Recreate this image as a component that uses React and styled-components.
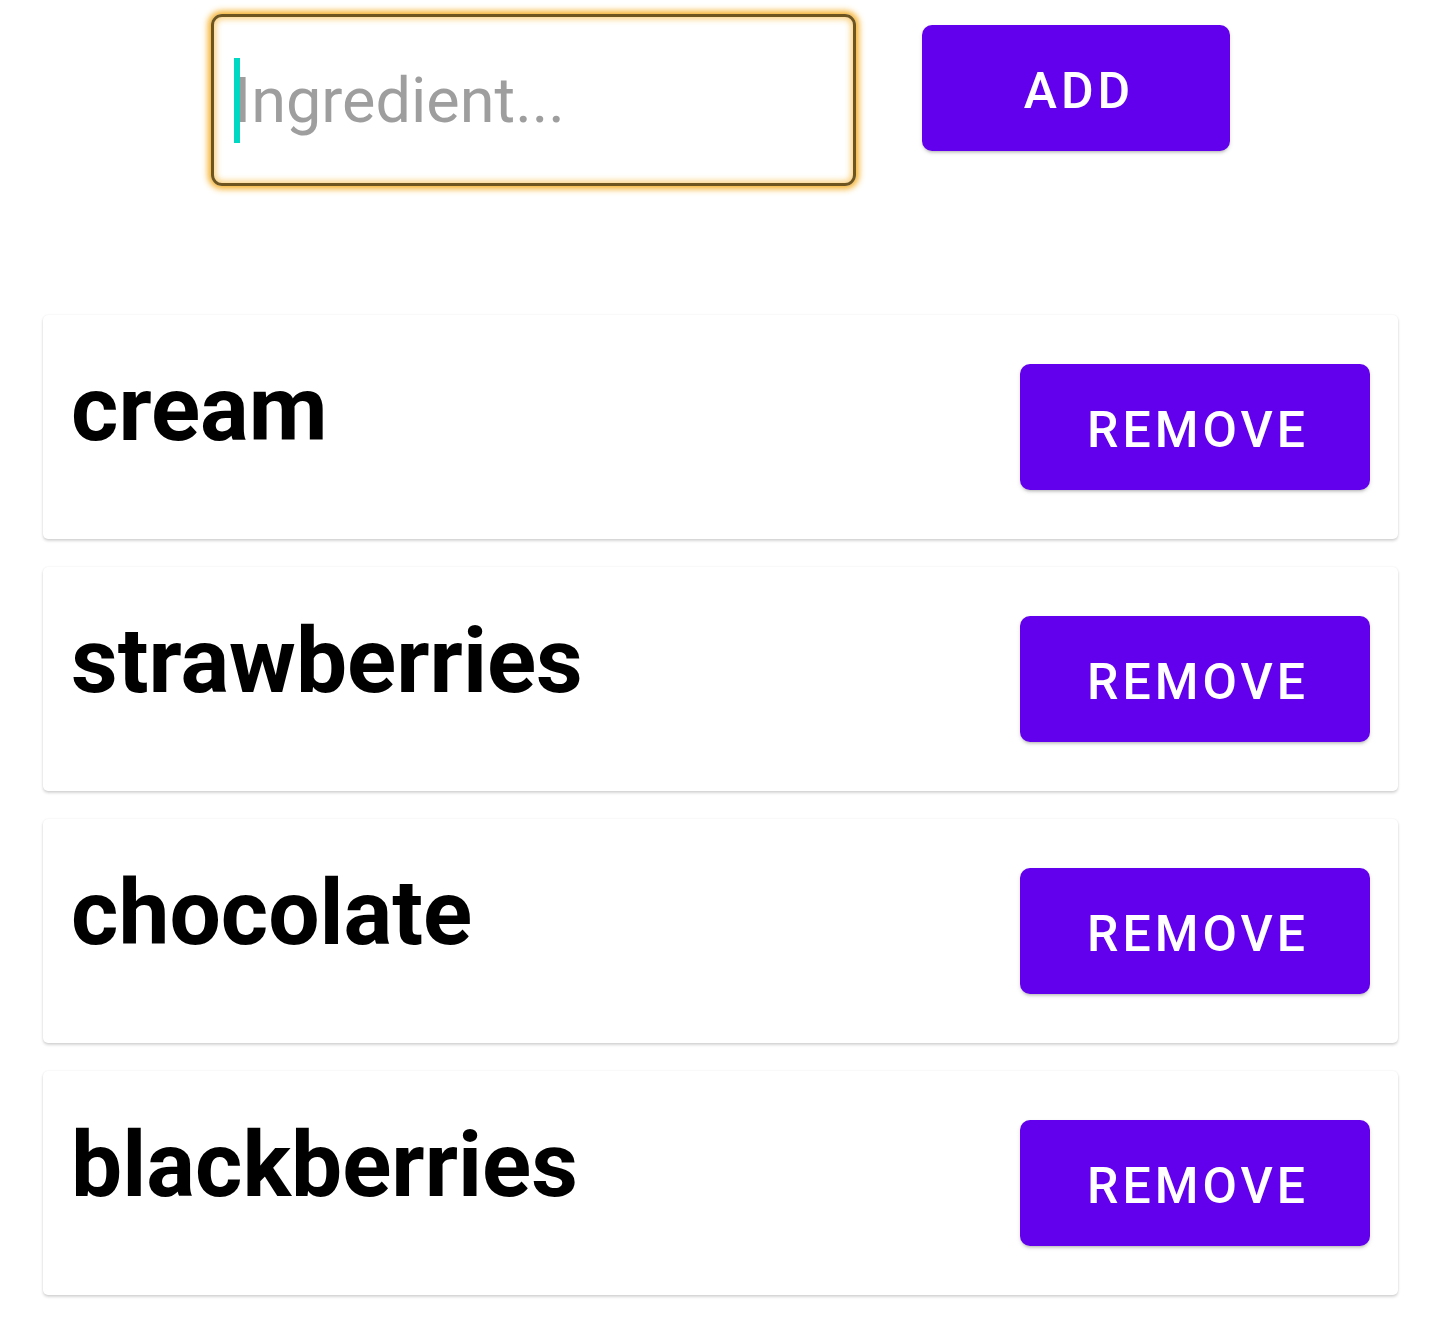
import React from "react";
import styled, { createGlobalStyle } from "styled-components";

const GlobalStyle = createGlobalStyle`
  body {
    margin: 0;
    background: #ffffff;
    font-family: Roboto, "Noto Sans", sans-serif;
  }
`;

const Page = styled.div`
  display: flex;
  flex-direction: column;
  padding: 14px 42px 40px 43px;
`;

const Form = styled.form`
  display: flex;
  align-items: flex-start;
  padding-left: 168px;
  gap: 66px;
  margin-bottom: 129px;
`;

const Field = styled.div`
  position: relative;
  width: 645px;
  height: 172px;
  box-sizing: border-box;
  border: 3px solid #6e5520;
  border-radius: 11px;
  box-shadow: 0 0 6px 3px #f5b02a, inset 0 0 6px 2px #fbd07a;
  display: flex;
  align-items: center;
`;

const Input = styled.input`
  border: none;
  outline: none;
  background: transparent;
  width: 100%;
  padding: 0 0 0 20px;
  font-family: Roboto, sans-serif;
  font-size: 63px;
  font-weight: 400;
  color: #222;
  caret-color: #00d8c4;

  &::placeholder {
    color: #9e9e9e;
  }
`;

const Caret = styled.span`
  position: absolute;
  left: 20px;
  top: 41px;
  width: 6px;
  height: 85px;
  background: #00d8c4;
`;

const Button = styled.button`
  width: ${(p) => p.$w}px;
  height: 126px;
  margin-top: ${(p) => p.$mt || 0}px;
  padding: 5px 0 0 6px;
  border: none;
  border-radius: 10px;
  background: #6200ee;
  color: #ffffff;
  font-family: Roboto, sans-serif;
  font-weight: 500;
  font-size: 50px;
  letter-spacing: 4px;
  text-transform: uppercase;
  box-shadow: 0 3px 3px -2px rgba(0, 0, 0, 0.2), 0 2px 4px 0 rgba(0, 0, 0, 0.12);
  flex-shrink: 0;
  cursor: pointer;
`;

const List = styled.div`
  display: flex;
  flex-direction: column;
  gap: 28px;
`;

const Card = styled.div`
  display: flex;
  justify-content: space-between;
  align-items: center;
  height: 224px;
  box-sizing: border-box;
  padding: 0 28px 0 28px;
  background: #ffffff;
  border-radius: 5px;
  box-shadow: 0 2px 3px rgba(0, 0, 0, 0.16), 0 0 2px rgba(0, 0, 0, 0.08);
`;

const Name = styled.h2`
  margin: 0 0 36px;
  font-family: Roboto, sans-serif;
  font-weight: 700;
  font-size: 91px;
  color: #000;
  line-height: 1;
`;

const ingredients = ["cream", "strawberries", "chocolate", "blackberries"];

function App() {
  return (
    <Page>
      <GlobalStyle />
      <Form onSubmit={(e) => e.preventDefault()}>
        <Field>
          <Input placeholder="Ingredient..." />
          <Caret />
        </Field>
        <Button $w={308} $mt={11} type="submit">
          Add
        </Button>
      </Form>
      <List>
        {ingredients.map((item) => (
          <Card key={item}>
            <Name>{item}</Name>
            <Button $w={350}>Remove</Button>
          </Card>
        ))}
      </List>
    </Page>
  );
}

export default App;
